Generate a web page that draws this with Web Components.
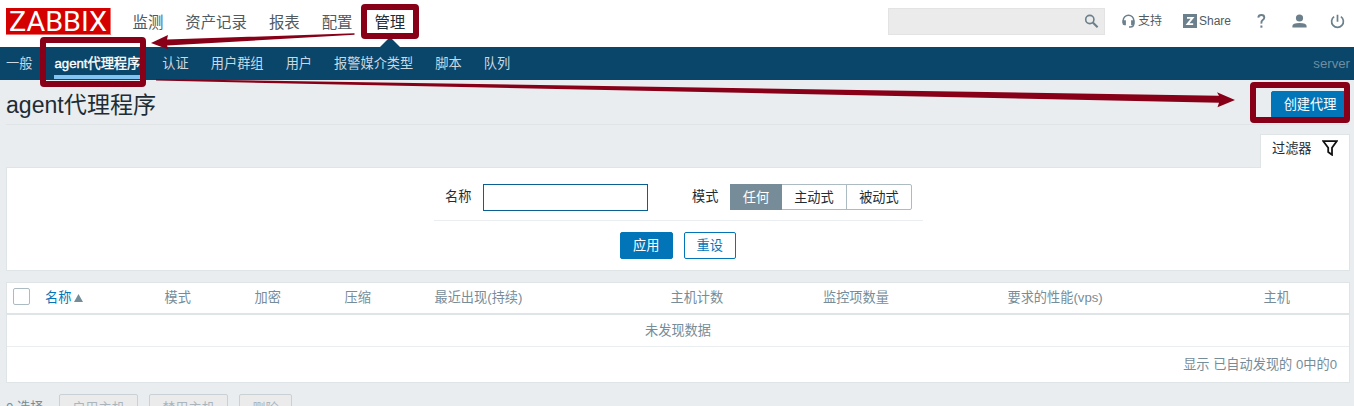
<!DOCTYPE html>
<html lang="zh-CN">
<head>
<meta charset="utf-8">
<title>agent代理程序</title>
<style>
html,body{margin:0;height:406px;overflow:hidden;background:#e9edf0}
body{font:13.2px/18px "Liberation Sans","Noto Sans CJK SC",sans-serif;color:#1f2c33}
</style>
</head>
<body>
<zbx-app></zbx-app>
<script>
const define = (name, html) => {
  const t = document.createElement('template');
  t.innerHTML = html;
  customElements.define(name, class extends HTMLElement {
    constructor() {
      super();
      this.attachShadow({mode: 'open'}).append(t.content.cloneNode(true));
    }
  });
};

define('zbx-logo', `<style>:host{display:block;width:105px;height:27px;background:#d40000;border-right:1px solid #ea7070;border-bottom:1px solid #ea7070;box-sizing:border-box}svg{display:block}</style>
<svg width="104" height="26"><text x="3" y="22.5" textLength="98" lengthAdjust="spacingAndGlyphs" font-family="Roboto" font-size="27" fill="#fff">ZABBIX</text></svg>`);

define('zbx-nav-item', `<style>:host{display:block;position:relative;font-size:15.4px;line-height:47px;color:#4f5a61;height:47px;white-space:nowrap}
:host([selected]){color:#1f2c33}
:host([selected])::after{content:"";position:absolute;left:50%;margin-left:-10px;bottom:0;border:10px solid transparent;border-top:0;border-bottom:10px solid #0a466a}
span{position:relative;top:-1px}</style><span><slot></slot></span>`);

define('zbx-sub-item', `<style>:host{display:block;height:33px;line-height:34px;color:#c9d8e1;white-space:nowrap}
:host([selected]){color:#fff;-webkit-text-stroke:.35px #fff;box-sizing:border-box;height:32px;border-bottom:4px solid #82c4f2}</style><slot></slot>`);

define('zbx-search', `<style>:host{display:flex;box-sizing:border-box;width:217px;height:27px;border:1px solid #e3e3e3;background:#ebebeb;justify-content:flex-end;align-items:center;padding-right:5px}</style>
<svg width="15" height="15" viewBox="0 0 15 15" fill="none" stroke="#6b808c"><circle cx="5.8" cy="5.5" r="4.1" stroke-width="1.6"/><path d="M8.8 8.5L13.6 13.3" stroke-width="2.1"/></svg>`);

define('zbx-topbar', `<style>:host{display:flex;height:47px;background:#fff;padding:0 9px 0 6px;align-items:flex-start}
zbx-logo{margin-top:8px}nav{display:flex;gap:22px;margin-left:21.5px}
zbx-search{margin:8px 0 0 auto}
.t{display:flex;margin-top:11px;height:20px;align-items:center;color:#4f5a61;font-size:12px;line-height:20px}
.t svg{display:block}</style>
<zbx-logo></zbx-logo>
<nav><zbx-nav-item>监测</zbx-nav-item><zbx-nav-item>资产记录</zbx-nav-item><zbx-nav-item>报表</zbx-nav-item><zbx-nav-item>配置</zbx-nav-item><zbx-nav-item selected>管理</zbx-nav-item></nav>
<zbx-search></zbx-search>
<div class="t" style="margin-left:17px;width:61px"><svg width="13" height="15" viewBox="0 0 13 15" style="margin-right:3px"><path d="M1.2 9V6.5a5.1 5.1 0 0 1 10.6 0v3q0 3.5-3.5 3.5H7" fill="none" stroke="#6b808c" stroke-width="1.5"/><path d="M.5 6.2h3.4v5.1H2.2Q.5 11.3.5 9.5zM12.5 6.2H9.1v5.1h1.7q1.7 0 1.7-1.8z" fill="#6b808c"/></svg>支持</div>
<div class="t" style="width:74px"><svg width="14" height="14" viewBox="0 0 14 14" style="margin-right:2px"><rect width="14" height="14" fill="#6b808c"/><path d="M4 3.9h5.600L4.500 10.100h5.700" fill="none" stroke="#fff" stroke-width="1.8"/></svg>Share</div>
<div class="t" style="width:35px"><svg width="9" height="16" viewBox="0 0 9 16"><path d="M1.3 4.600Q1.500 2 4.400 2T7.300 4.500Q7.300 5.900 5.700 7.100T4.400 10.600" fill="none" stroke="#6b808c" stroke-width="1.9"/><rect x="3.400" y="12.500" width="2" height="2.200" fill="#6b808c"/></svg></div>
<div class="t" style="width:38px"><svg width="15" height="14" viewBox="0 0 15 14" fill="#6b808c"><circle cx="7.500" cy="4" r="3.600"/><path d="M.4 13.600v-1.700Q.4 9 7.500 9t7.100 2.900v1.700z"/></svg></div>
<div class="t"><svg width="15" height="15" viewBox="0 0 15 15" fill="none" stroke="#6b808c" stroke-width="1.7"><path d="M7.500 .8v7M4.100 2.600a5.900 5.900 0 1 0 6.800 0"/></svg></div>`);

define('zbx-subbar', `<style>:host{display:flex;height:33px;background:#0a466a;padding:0 4px 0 6px;gap:22.1px}
.s{margin-left:auto;color:#6d8ea3;line-height:33px}</style>
<zbx-sub-item>一般</zbx-sub-item><zbx-sub-item selected>agent代理程序</zbx-sub-item><zbx-sub-item>认证</zbx-sub-item><zbx-sub-item>用户群组</zbx-sub-item><zbx-sub-item>用户</zbx-sub-item><zbx-sub-item>报警媒介类型</zbx-sub-item><zbx-sub-item>脚本</zbx-sub-item><zbx-sub-item>队列</zbx-sub-item><span class="s">server</span>`);

define('zbx-button', `<style>:host{display:block;box-sizing:border-box;height:27px;line-height:25px;text-align:center;border:1px solid #0275b8;border-radius:2px;background:#0275b8;color:#fff;white-space:nowrap}
:host([alt]){background:#fff;color:#0275b8}
:host([disabled]){background:#ebebeb;color:#a9b6be;border-color:#c9d1d6}</style><slot></slot>`);

define('zbx-title', `<style>:host{display:flex;justify-content:space-between;height:44px;margin:0 5px 0 6px;border-bottom:1px solid #dfe4e7}
h1{font-weight:400;font-size:23.1px;line-height:50px;height:44px;margin:0}zbx-button{width:78px;margin-top:11px}</style><h1>agent代理程序</h1><zbx-button>创建代理</zbx-button>`);

define('zbx-radio', `<style>:host{display:flex;box-sizing:border-box;width:182px;height:26px;border:1px solid #acbbc2;border-radius:2px;background:#fff;line-height:25px;text-align:center}
span{box-sizing:border-box}.a{background:#768d99;color:#fff;width:51px;margin:-1px 0 -1px -1px;padding-top:1px;flex:0 0 52px}.b{flex:0 0 64px}.c{flex:1;border-left:1px solid #acbbc2}</style><span class="a">任何</span><span class="b">主动式</span><span class="c">被动式</span>`);

define('zbx-filter', `<style>:host{display:block;margin:9px 4px 0 6px}
.tab{position:relative;z-index:1;box-sizing:border-box;display:flex;align-items:center;width:90px;height:34px;margin:0 0 -1px auto;background:#fff;border:1px solid #dfe4e7;border-bottom:0;padding:0 11px 6px;justify-content:space-between}
.box{box-sizing:border-box;height:104px;background:#fff;border:1px solid #dfe4e7;padding-top:16px}
.form{width:490px;margin:0 0 0 427px}
.row{display:flex;height:36px;border-bottom:1px solid #ebeef0;box-sizing:content-box;padding-left:11px;width:478px}
.row label{line-height:25px}
input{box-sizing:border-box;width:165px;height:27px;margin:0 44px 0 11.6px;border:1px solid #0b6093;padding:0;background:#fff}
zbx-radio{margin-left:11.6px}
.btns{display:flex;gap:11px;padding:11px 0 0 186px}.btns zbx-button{width:52.5px}</style>
<div class="tab">过滤器<svg width="16" height="16" viewBox="0 0 16 16" fill="none" stroke="#111" stroke-width="1.8" style="position:relative;top:-1px"><path d="M1.300 1.200h13.400L10 7.800v7L6.200 12V7.800z"/></svg></div>
<div class="box"><div class="form"><div class="row"><label>名称</label><input><label>模式</label><zbx-radio></zbx-radio></div><div class="btns"><zbx-button>应用</zbx-button><zbx-button alt>重设</zbx-button></div></div></div>`);

define('zbx-table', `<style>:host{display:block;box-sizing:border-box;height:101px;margin:11px 4px 0 6px;background:#fff;border:1px solid #dfe4e7;color:#768d99}
.h{display:grid;grid-template-columns:38px 119.5px 90px 90px 90px 236px 152.5px 184.5px 256px 1fr;height:30px;line-height:29px;border-bottom:2px solid #dfe4e7;white-space:nowrap}
.cb{box-sizing:border-box;width:17px;height:17px;border:1px solid #acbbc2;border-radius:2px;margin:5px 0 0 6px}
a{color:#0275b8}svg{margin-left:3px}
.e{height:31px;line-height:31px;text-align:center;border-bottom:1px solid #ebeef0}
.f{line-height:36px;height:34px;text-align:right;padding-right:12px}</style>
<div class="h"><span class="cb"></span><span><a>名称</a><svg width="9" height="8"><path d="M0 8L4.5 0L9 8z" fill="#768d99"/></svg></span><span>模式</span><span>加密</span><span>压缩</span><span>最近出现(持续)</span><span>主机计数</span><span>监控项数量</span><span>要求的性能(vps)</span><span>主机</span></div>
<div class="e">未发现数据</div><div class="f">显示 已自动发现的 0中的0</div>`);

define('zbx-actions', `<style>:host{display:flex;margin:11px 0 0 6px;gap:11px;color:#768d99}
.n{width:42px;line-height:28px;white-space:nowrap}zbx-button{line-height:27px}</style>
<span class="n">0 选择</span><zbx-button disabled style="width:79px">启用主机</zbx-button><zbx-button disabled style="width:79px">禁用主机</zbx-button><zbx-button disabled style="width:53px">删除</zbx-button>`);

define('zbx-callouts', `<style>:host{position:absolute;left:0;top:0;pointer-events:none}svg{display:block}</style>
<svg width="1354" height="406"><g fill="none" stroke="#870018" stroke-width="6"><rect x="364" y="7" width="52" height="29" rx="1"/><rect x="43" y="40" width="100" height="44" rx="1"/><rect x="1253" y="85" width="94" height="35" rx="1"/></g>
<g fill="#870018"><path d="M354.500 33.200L167 39.600L168 35L151 43L168.500 49.500L167 45.500L354.500 34.800z"/><path d="M156 79L1219 95.800L1217 92.300L1235 100L1217.500 107.300L1219 102.800L156 80.600z"/></g></svg>`);

define('zbx-app', `<style>:host{display:block;position:relative;height:406px;overflow:hidden}</style>
<zbx-topbar></zbx-topbar><zbx-subbar></zbx-subbar><zbx-title></zbx-title><zbx-filter></zbx-filter><zbx-table></zbx-table><zbx-actions></zbx-actions><zbx-callouts></zbx-callouts>`);
</script>
</body>
</html>
